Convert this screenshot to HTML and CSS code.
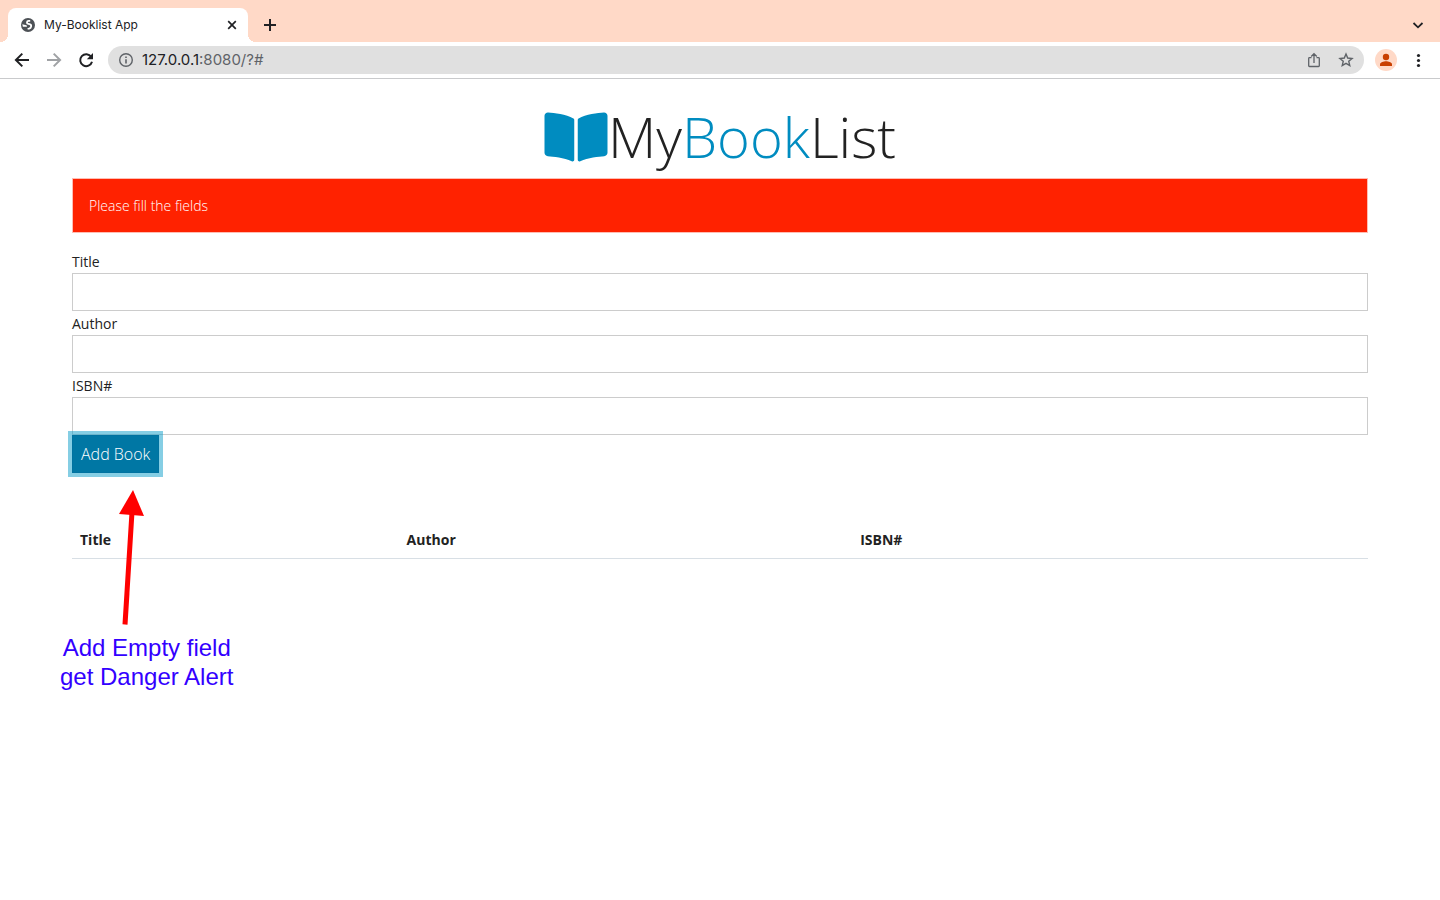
FILE: index.html
```html
<!DOCTYPE html>
<html lang="en">
<head>
<meta charset="utf-8">
<meta name="viewport" content="width=device-width, initial-scale=1">
<title>My-Booklist App</title>
<link rel="stylesheet" href="styles.css">
</head>
<body>
<header class="browser">
  <div class="tab-strip">
    <div class="tab">
      <svg class="tab-icon" width="16" height="16" viewBox="0 0 16 16" aria-hidden="true"><circle cx="8" cy="8" r="7" fill="#4d5156"/><path d="M10.200 3.900H8.600C6.600 3.900 6.300 6.500 8.300 6.900L9.600 7.200C12 7.800 11.500 11 9.200 11.500L7.600 12" fill="none" stroke="#fff" stroke-width="1.800"/><path d="M2.300 7.300 6.300 8.200C7.400 8.500 7.200 9.800 6 9.800H4.800L2.900 9.700Z" fill="#fff"/></svg>
      <span class="tab-title">My-Booklist App</span>
      <button class="icon-button" type="button" aria-label="Close tab"><svg width="16" height="16" viewBox="0 0 16 16"><path d="M4.200 4.200 11.800 11.800M11.800 4.200 4.200 11.800" stroke="#202124" stroke-width="1.700"/></svg></button>
    </div>
    <button class="icon-button new-tab" type="button" aria-label="New tab"><svg width="16" height="16" viewBox="0 0 16 16"><path d="M8 2v12M2 8h12" stroke="#202124" stroke-width="2"/></svg></button>
    <button class="icon-button tab-search" type="button" aria-label="Search tabs"><svg width="16" height="16" viewBox="0 0 16 16"><path d="M3.500 6 8 10.300 12.500 6" fill="none" stroke="#202124" stroke-width="1.800"/></svg></button>
  </div>
  <div class="toolbar">
    <nav class="nav-buttons" aria-label="History">
      <button class="icon-button" type="button" aria-label="Back"><svg width="16" height="16" viewBox="0 0 16 16"><path d="M15 8H2.500M8.300 1.600 1.900 8 8.300 14.400" fill="none" stroke="#202124" stroke-width="2"/></svg></button>
      <button class="icon-button" type="button" aria-label="Forward"><svg width="16" height="16" viewBox="0 0 16 16"><path d="M1 8H13.500M7.700 1.600 14.100 8 7.700 14.400" fill="none" stroke="#a0a2a5" stroke-width="2"/></svg></button>
      <button class="icon-button" type="button" aria-label="Reload"><svg width="16" height="16" viewBox="0 0 16 16"><path d="M13.200 4.800A6 6 0 1 0 14 9.700" fill="none" stroke="#202124" stroke-width="2"/><path d="M15 1V7.200H8.800Z" fill="#202124"/></svg></button>
    </nav>
    <div class="address">
      <svg width="16" height="16" viewBox="0 0 16 16" aria-hidden="true"><circle cx="8" cy="8" r="6.300" fill="none" stroke="#5f6368" stroke-width="1.400"/><path d="M8 7.200V11.500M8 4.400V6" stroke="#5f6368" stroke-width="1.600"/></svg>
      <span class="url"><span class="host">127.0.0.1</span>:8080/?#</span>
      <button class="icon-button" type="button" aria-label="Share"><svg width="16" height="16" viewBox="0 0 16 16"><path d="M5.500 5.700H3.500Q2.700 5.700 2.700 6.500V13.700Q2.700 14.500 3.500 14.500H12.500Q13.300 14.500 13.300 13.700V6.500Q13.300 5.700 12.500 5.700H10.500M8 11V2.200M5.200 4.500 8 1.700 10.800 4.500" fill="none" stroke="#5f6368" stroke-width="1.300"/></svg></button>
      <button class="icon-button" type="button" aria-label="Bookmark this tab"><svg width="16" height="16" viewBox="0 0 16 16"><path d="M8 2 9.700 6.050 14.100 6.430 10.760 9.320 11.760 13.610 8 11.330 4.240 13.610 5.240 9.320 1.900 6.430 6.300 6.050Z" fill="none" stroke="#5f6368" stroke-width="1.400"/></svg></button>
    </div>
    <button class="icon-button profile" type="button" aria-label="Profile"><svg width="22" height="22" viewBox="0 0 22 22"><circle cx="11" cy="11" r="11" fill="#ffd9c7"/><circle cx="11" cy="8" r="3.200" fill="#c93f00"/><path d="M5 16.900V15.400C5 13.300 8.800 12.300 11 12.300S17 13.300 17 15.400V16.900Z" fill="#c93f00"/></svg></button>
    <button class="icon-button" type="button" aria-label="Menu"><svg width="16" height="16" viewBox="0 0 16 16"><g fill="#202124"><circle cx="8.500" cy="3.500" r="1.600"/><circle cx="8.500" cy="8.500" r="1.600"/><circle cx="8.500" cy="13.500" r="1.600"/></g></svg></button>
  </div>
</header>
<main class="container">
  <h1 class="brand"><svg class="brand-icon" viewBox="0 0 576 512" aria-hidden="true"><path fill="currentColor" d="M542.22 32.05c-54.8 3.11-163.72 14.43-230.96 55.59-4.64 2.84-7.27 7.89-7.27 13.17v363.87c0 11.55 12.63 18.85 23.28 13.49 69.18-34.82 169.23-44.32 218.7-46.92 16.89-.89 30.02-14.43 30.02-30.66V62.75c.01-17.71-15.35-31.74-33.77-30.7zM264.73 87.64C197.5 46.48 88.58 35.17 33.78 32.05 15.36 31.01 0 45.04 0 62.75V400.6c0 16.24 13.13 29.78 30.02 30.66 49.49 2.6 149.59 12.11 218.77 46.95 10.62 5.35 23.21-1.94 23.21-13.46V100.63c0-5.29-2.62-10.14-7.27-12.99z"/></svg><span>My<span class="accent">Book</span>List</span></h1>
  <div class="alert" role="alert">Please fill the fields</div>
  <form class="book-form">
    <label for="title">Title</label>
    <input type="text" id="title">
    <label for="author">Author</label>
    <input type="text" id="author">
    <label for="isbn">ISBN#</label>
    <input type="text" id="isbn">
    <div class="submit-row">
      <button class="submit" type="button">Add Book</button>
      <div class="note">
        <svg class="note-arrow" width="28" height="136" viewBox="0 0 28 136" aria-hidden="true"><path d="M14 22 7 134.500" stroke="#f00" stroke-width="5"/><path d="M15 0 1 24 26 26Z" fill="#f00"/></svg>
        <p class="note-text">Add Empty field<br>get Danger Alert</p>
      </div>
    </div>
  </form>
  <table class="books">
    <thead><tr><th class="col-title" scope="col">Title</th><th class="col-author" scope="col">Author</th><th scope="col">ISBN#</th></tr></thead>
    <tbody></tbody>
  </table>
</main>
</body>
</html>
```
FILE: styles.css
```css
* { box-sizing: border-box; }

body {
  min-height: 100vh;
  margin: 0;
  background: #fff;
  color: #222;
  font: 400 14px/21px "Open Sans", "Noto Sans", sans-serif;
}

svg { display: block; }

/* Browser frame */
.browser {
  border-bottom: 1px solid #c9cacc;
  font-family: Inter, Roboto, sans-serif;
}

.icon-button {
  flex: none;
  padding: 0;
  border: 0;
  background: none;
}

.tab-strip {
  display: flex;
  align-items: center;
  height: 42px;
  padding: 8px 14px 0 8px;
  background: #ffd9c7;
}

.tab {
  position: relative;
  display: flex;
  align-items: center;
  gap: 8px;
  width: 240px;
  height: 34px;
  padding: 0 8px 0 12px;
  border-radius: 8px 8px 0 0;
  background: #fff;
}

.tab::before,
.tab::after {
  position: absolute;
  bottom: 0;
  width: 8px;
  height: 8px;
  content: "";
}

.tab::before {
  right: 100%;
  background: radial-gradient(circle at 0 0, transparent 8px, #fff 8px);
}

.tab::after {
  left: 100%;
  background: radial-gradient(circle at 100% 0, transparent 8px, #fff 8px);
}

.tab-title {
  flex: 1;
  color: #202124;
  font-size: 12px;
  line-height: 20px;
}

.new-tab { margin-left: 14px; }

.tab-search { margin-left: auto; }

.toolbar {
  display: flex;
  align-items: center;
  height: 36px;
  padding: 0 14px;
}

.nav-buttons {
  display: flex;
  gap: 16px;
}

.address {
  display: flex;
  flex: 1;
  align-items: center;
  gap: 16px;
  height: 28px;
  margin: 0 11px 0 14px;
  padding: 0 10px;
  border-radius: 14px;
  background: #e0e0e0;
}

.url {
  flex: 1;
  margin-left: -8px;
  color: #5f6368;
  font-size: 15px;
  line-height: 20px;
}

.host { color: #202124; }

.profile { margin-right: 13px; }

/* Book list page */
.container {
  max-width: 1320px;
  margin: 0 auto;
  padding: 24px 12px;
}

.brand {
  display: flex;
  align-items: center;
  justify-content: center;
  margin: 0 0 8px;
  font-size: 56px;
  font-weight: 300;
  line-height: 67px;
}

.brand-icon {
  width: 64px;
  height: 56px;
  color: #008cc0;
}

.accent { color: #008cc0; }

.alert {
  margin-bottom: 16px;
  padding: 16px;
  border: 1px solid #ffbdb3;
  background: #ff2200;
  color: #fff;
  font-weight: 300;
}

.book-form {
  display: flex;
  flex-direction: column;
}

.book-form label {
  padding-top: 2px;
  line-height: 22px;
}

.book-form input {
  width: 100%;
  height: 38px;
  padding: 8px 12px;
  border: 1px solid #ccc;
  border-radius: 0;
  background: #fff;
  font: inherit;
}

.submit-row {
  position: relative;
  display: flex;
}

.submit {
  height: 38px;
  padding: 0 8px;
  border: 1px solid #0072a0;
  background: #0077a4;
  box-shadow: 0 0 0 4px rgba(12, 158, 202, 0.5);
  color: #fff;
  font: 300 16px/24px "Open Sans", "Noto Sans", sans-serif;
}

.note {
  position: absolute;
  top: 55px;
  left: -12px;
  display: flex;
  flex-direction: column;
  gap: 7px;
}

.note-arrow { margin-left: 58px; }

.note-text {
  margin: 0;
  color: #30f;
  font: 24px/29px "Liberation Sans", Helvetica, Arial, sans-serif;
  text-align: center;
  white-space: nowrap;
}

.books {
  width: 100%;
  margin-top: 48px;
  border-collapse: collapse;
  table-layout: fixed;
}

.books th {
  padding: 8px;
  border-bottom: 1px solid #d8dfe5;
  font-weight: 700;
  text-align: left;
}

.col-title { width: 25.2%; }

.col-author { width: 35%; }
```
